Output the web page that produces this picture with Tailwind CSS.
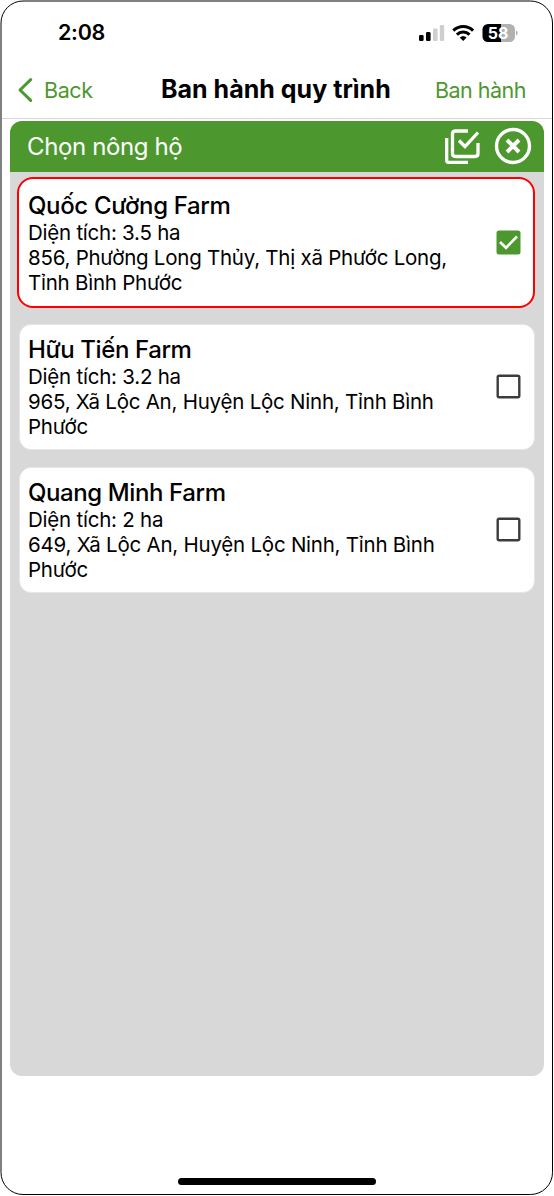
<!DOCTYPE html>
<html lang="vi">
<head>
<meta charset="utf-8">
<title>Ban hành quy trình</title>
<script src="https://cdn.jsdelivr.net/npm/@tailwindcss/browser@4"></script>
</head>
<body class="bg-white">
<div class="relative flex h-[1196px] w-[554px] flex-col overflow-hidden bg-white px-[2px] font-['Inter','Noto_Sans',sans-serif] text-black">
  <!-- Status bar -->
  <div class="flex h-[62px] shrink-0 items-center justify-between pt-[3px] pr-[34px] pl-[56px]">
    <span class="text-[21.5px] font-semibold tracking-[-0.3px]">2:08</span>
    <svg class="h-[20px] w-[100px]" viewBox="418 22 100 20">
      <g><rect x="419" y="34" width="4.600" height="6" rx="1.300"/><rect x="426" y="31" width="4.600" height="9" rx="1.300"/><g fill="#cfcfcf"><rect x="433" y="27.500" width="4.600" height="12.500" rx="1.300"/><rect x="439.800" y="24" width="4.400" height="16" rx="1.300"/></g></g>
      <g fill="none" stroke="#000" stroke-width="3.100"><path d="M453.300 29.600a14 14 0 0 1 19.800 0"/><path d="M456.900 33.600a9.100 9.100 0 0 1 12.600 0"/></g>
      <path d="M459.800 36.600a5 5 0 0 1 6.800 0l-3.400 3.400z"/>
      <path d="M488 23h13v18h-13a5.500 5.500 0 0 1-5.500-5.500v-7a5.500 5.500 0 0 1 5.500-5.500z"/>
      <path fill="#b1b1b1" d="M501 23h8.500a5.500 5.500 0 0 1 5.500 5.500v7a5.500 5.500 0 0 1-5.500 5.500H501zM516 29.300q1.700.9 1.700 2.700t-1.700 2.700z"/>
      <text x="498" y="37.700" text-anchor="middle" fill="#fff" font-family="Inter, sans-serif" font-size="16" font-weight="700">58</text>
    </svg>
  </div>
  <!-- Navigation bar -->
  <div class="flex h-[57px] shrink-0 items-center border-b border-[#d8d8d8] pr-[26px] pl-[15px] whitespace-nowrap">
    <svg class="h-[26px] w-[16px]" viewBox="0 0 16 26" fill="none" stroke="#4d982e" stroke-width="3" stroke-linecap="round" stroke-linejoin="round"><path d="M13.700 2.600 3 13l10.700 10.400"/></svg>
    <span class="ml-[11px] w-[117px] text-[21.500px] tracking-[-0.4px] text-[#4d982e]">Back</span>
    <h1 class="text-[25px] font-bold tracking-[0.020px]">Ban hành quy trình</h1>
    <span class="ml-auto text-[21.500px] tracking-[-0.500px] text-[#4d982e]">Ban hành</span>
  </div>
  <!-- Farm picker -->
  <section class="mx-[8px] mt-[1.500px] h-[955px] shrink-0 overflow-hidden rounded-[12px] bg-[#d8d8d8]">
    <header class="flex h-[51px] items-center bg-[#4d982e] pr-[12px] pl-[17px] text-white">
      <h2 class="pt-[2px] text-[24px] tracking-[-0.380px]">Chọn nông hộ</h2>
      <svg class="ml-auto h-[36px] w-[36px]" viewBox="444 128 36 36" fill="none" stroke="#fff" stroke-width="3.300"><path d="M468 131H455.500q-3 0-3 3v19.500q0 3 3 3h19.500q3 0 3-3V143M446.700 138v22q0 2.500 2.500 2.500H468M459 140.500l6 6 13-14"/></svg>
      <svg class="ml-[14px] h-[38px] w-[38px]" viewBox="0 0 38 38" fill="none" stroke="#fff"><circle cx="19" cy="19" r="16.500" stroke-width="3.400"/><path stroke-width="4" d="m13 13 12 12M25 13 13 25"/></svg>
    </header>
    <div class="flex flex-col gap-[16px] px-[7px] pt-[5px]">
      <article class="mr-[2px] flex h-[131px] items-center justify-between rounded-[16px] border-2 border-[#f00] bg-white pt-[1px] pr-[12px] pl-[9px]">
        <div class="pt-px whitespace-nowrap">
          <h3 class="text-[24px] leading-[29px] font-medium tracking-[-0.350px]">Quốc Cường Farm</h3>
          <p class="text-[20.500px] leading-[25.300px] tracking-[-0.240px]">Diện tích: 3.5 ha<br>856, Phường Long Thủy, Thị xã Phước Long,<br>Tỉnh Bình Phước</p>
        </div>
        <svg class="h-[25px] w-[25px]" viewBox="0 0 25 25"><rect x=".5" y=".5" width="24" height="24" rx="2.500" fill="#4d982e"/><path d="m4 12 6 5.800L21 6.500" fill="none" stroke="#fff" stroke-width="2.600"/></svg>
      </article>
      <article class="mx-[2px] flex h-[126px] items-center justify-between rounded-[12px] border border-[#e6e6e6] bg-white pr-[13px] pl-[8px]">
        <div class="pt-px whitespace-nowrap">
          <h3 class="text-[24px] leading-[29px] font-medium tracking-[-0.400px]">Hữu Tiến Farm</h3>
          <p class="text-[20.500px] leading-[25.300px] tracking-[-0.230px]">Diện tích: 3.2 ha<br>965, Xã Lộc An, Huyện Lộc Ninh, Tỉnh Bình<br>Phước</p>
        </div>
        <svg class="h-[25px] w-[25px]" viewBox="0 0 25 25"><rect x="1.700" y="1.700" width="21.600" height="21.600" rx="1.500" fill="none" stroke="#3c3c3c" stroke-width="2.400"/></svg>
      </article>
      <article class="mx-[2px] mt-px flex h-[126px] items-center justify-between rounded-[12px] border border-[#e6e6e6] bg-white pr-[13px] pl-[8px]">
        <div class="pt-px whitespace-nowrap">
          <h3 class="text-[24px] leading-[29px] font-medium tracking-[-0.400px]">Quang Minh Farm</h3>
          <p class="text-[20.500px] leading-[25.300px] tracking-[-0.230px]">Diện tích: 2 ha<br>649, Xã Lộc An, Huyện Lộc Ninh, Tỉnh Bình<br>Phước</p>
        </div>
        <svg class="h-[25px] w-[25px]" viewBox="0 0 25 25"><rect x="1.700" y="1.700" width="21.600" height="21.600" rx="1.500" fill="none" stroke="#3c3c3c" stroke-width="2.400"/></svg>
      </article>
    </div>
  </section>
  <!-- Home indicator -->
  <div class="mx-auto mt-auto mb-[11px] h-[7px] w-[198px] rounded-full bg-black"></div>
  <!-- Device outline -->
  <svg class="pointer-events-none absolute inset-0 h-[1196px] w-[554px]" viewBox="0 0 554 1196" fill="none"><rect x="1" y="1" width="551.500" height="1193.500" rx="22" stroke="#000"/></svg>
</div>
</body>
</html>
